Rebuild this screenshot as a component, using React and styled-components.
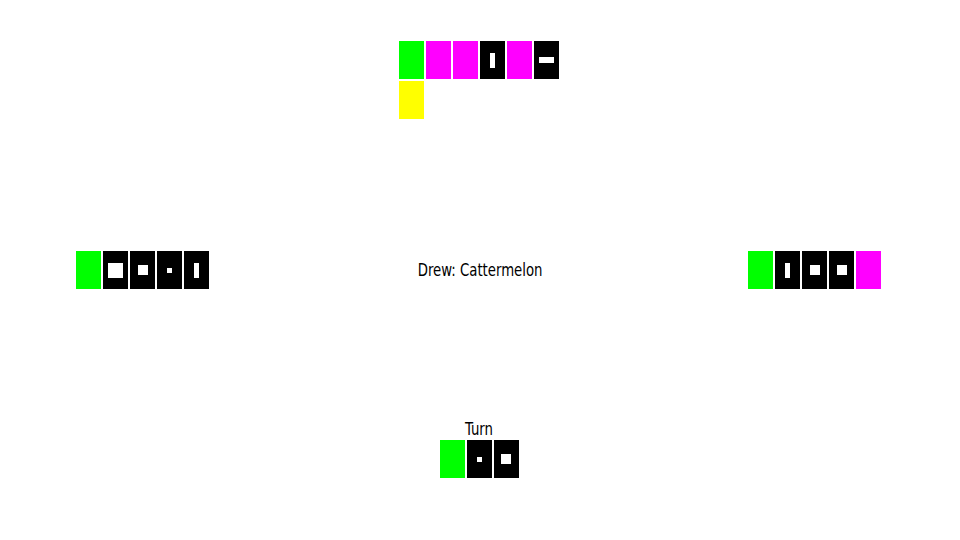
import React from "react";
import styled, { createGlobalStyle } from "styled-components";

const Global = createGlobalStyle`
  html, body { margin: 0; padding: 0; background: #fff; }
  body { font-family: "DejaVu Sans Condensed", "Liberation Sans", sans-serif; color: #000; }
`;

const Table = styled.div`
  width: 960px;
  height: 540px;
  display: grid;
  grid-template-rows: 1fr auto 1fr;
  overflow: hidden;
`;

const TopArea = styled.div`
  display: flex;
  justify-content: center;
  align-items: flex-start;
  padding: 40px 2px 0 0;
`;

const BottomArea = styled.div`
  display: flex;
  flex-direction: column;
  align-items: center;
  justify-content: flex-end;
  padding: 0 2px 61px 0;
`;

const MiddleRow = styled.div`
  display: grid;
  grid-template-columns: 1fr auto 1fr;
  align-items: center;
`;

const Hand = styled.div`
  display: flex;
  flex-wrap: wrap;
  width: ${(p) => (p.$max ? `${p.$max * 27}px` : "auto")};
  justify-self: ${(p) => p.$side || "center"};
  margin: ${(p) => p.$margin || "0"};
`;

const colors = { green: "#00ff00", magenta: "#ff00ff", yellow: "#ffff00", black: "#000" };

const Card = styled.div`
  width: 25px;
  height: 38px;
  margin: 1px;
  background: ${(p) => colors[p.$color]};
  display: flex;
  align-items: center;
  justify-content: center;
`;

const pipSizes = {
  big: [15, 15],
  med: [10, 10],
  small: [5, 5],
  vbar: [5, 15],
  hbar: [15, 6],
};

const Pip = styled.div`
  background: #fff;
  width: ${(p) => pipSizes[p.$kind][0]}px;
  height: ${(p) => pipSizes[p.$kind][1]}px;
`;

const Message = styled.div`
  font-size: 18px;
  line-height: 20px;
  text-align: center;
  padding: 0 10px;
  transform: scaleX(0.82);
`;

const Label = styled.div`
  font-size: 18px;
  line-height: 20px;
  margin-bottom: 0;
  transform: scaleX(0.82);
`;

const PlayingCard = ({ color, pip }) => (
  <Card $color={color}>{pip && <Pip $kind={pip} />}</Card>
);

const topCards = [
  { color: "green" },
  { color: "magenta" },
  { color: "magenta" },
  { color: "black", pip: "vbar" },
  { color: "magenta" },
  { color: "black", pip: "hbar" },
  { color: "yellow" },
];
const leftCards = [
  { color: "green" },
  { color: "black", pip: "big" },
  { color: "black", pip: "med" },
  { color: "black", pip: "small" },
  { color: "black", pip: "vbar" },
];
const rightCards = [
  { color: "green" },
  { color: "black", pip: "vbar" },
  { color: "black", pip: "med" },
  { color: "black", pip: "med" },
  { color: "magenta" },
];
const bottomCards = [
  { color: "green" },
  { color: "black", pip: "small" },
  { color: "black", pip: "med" },
];

export default function App() {
  return (
    <>
      <Global />
      <Table>
        <TopArea>
          <Hand $max={6}>
            {topCards.map((c, i) => (
              <PlayingCard key={i} {...c} />
            ))}
          </Hand>
        </TopArea>
        <MiddleRow>
          <Hand $side="start" $margin="0 0 0 75px">
            {leftCards.map((c, i) => (
              <PlayingCard key={i} {...c} />
            ))}
          </Hand>
          <Message>Drew: Cattermelon</Message>
          <Hand $side="end" $margin="0 78px 0 0">
            {rightCards.map((c, i) => (
              <PlayingCard key={i} {...c} />
            ))}
          </Hand>
        </MiddleRow>
        <BottomArea>
          <Label>Turn</Label>
          <Hand>
            {bottomCards.map((c, i) => (
              <PlayingCard key={i} {...c} />
            ))}
          </Hand>
        </BottomArea>
      </Table>
    </>
  );
}
